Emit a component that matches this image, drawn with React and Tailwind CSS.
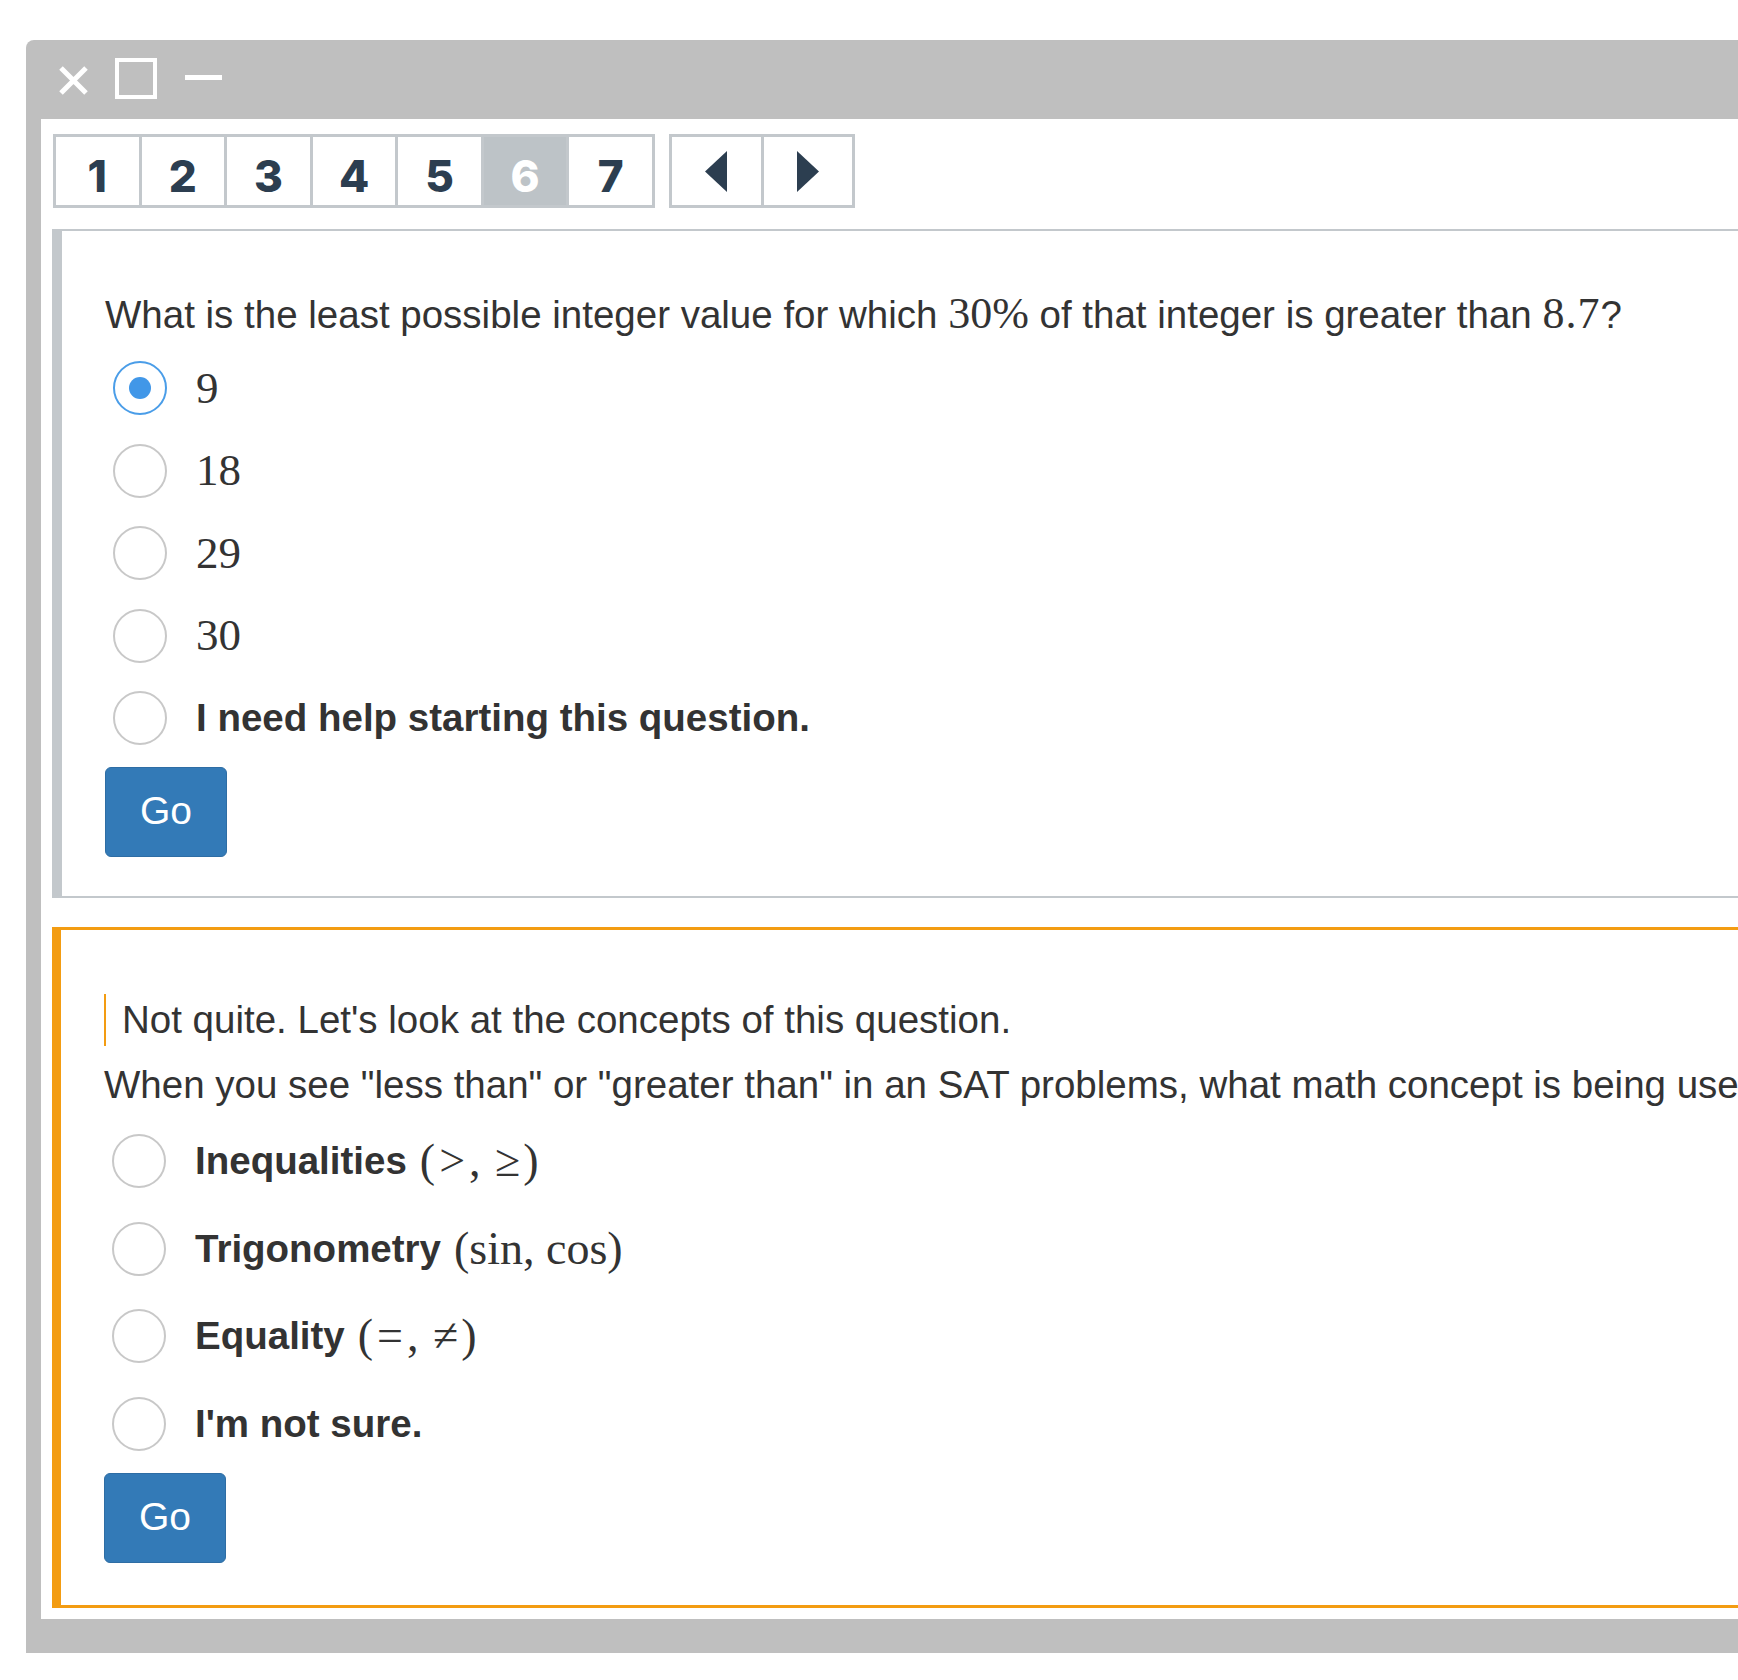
import React, { useState } from 'react';

const sans = { fontFamily: '"Liberation Sans", Arial, sans-serif' };
const serif = { fontFamily: '"Liberation Serif", "DejaVu Serif", serif' };

function Radio({ checked }) {
  return (
    <span
      className={`flex items-center justify-center w-[54px] h-[54px] shrink-0 rounded-full border-2 bg-white ${checked ? 'border-[#4a9de8]' : 'border-[#c8c8c8]'}`}
    >
      {checked && <span className="block w-[22px] h-[22px] rounded-full bg-[#4197e8]" />}
    </span>
  );
}

function Option({ checked, onClick, height, children }) {
  return (
    <div className={`flex items-center ${height}`} onClick={onClick}>
      <span className="ml-[8px]">
        <Radio checked={checked} />
      </span>
      <span className="ml-[29px] flex items-center text-[#333] leading-none">{children}</span>
    </div>
  );
}

function GoButton() {
  return (
    <button
      className="w-[122px] h-[90px] rounded-[6px] bg-[#337ab7] border border-[#2e6da4] text-white text-[39px]"
      style={sans}
    >
      Go
    </button>
  );
}

function Num({ children }) {
  return <span className="text-[45px]" style={serif}>{children}</span>;
}

function Bold({ children }) {
  return <span className="font-bold text-[38.5px]" style={sans}>{children}</span>;
}

// math group like (a, b) with relation spacing
function MathPair({ a, b, rel }) {
  return (
    <span className="ml-[13px] text-[46px] whitespace-nowrap" style={serif}>
      (<span className={rel ? 'mx-[4px]' : ''}>{a}</span>,{' '}
      <span className={rel ? 'mx-[3px]' : ''}>{b}</span>)
    </span>
  );
}

export default function App() {
  const [first, setFirst] = useState(0);
  const [second, setSecond] = useState(-1);
  const pages = [1, 2, 3, 4, 5, 6, 7];
  const current = 6;

  const answers = ['9', '18', '29', '30'];
  const concepts = [
    { name: 'Inequalities', a: '>', b: '≥', rel: true },
    { name: 'Trigonometry', a: 'sin', b: 'cos', rel: false },
    { name: 'Equality', a: '=', b: '≠', rel: true },
  ];

  return (
    <div className="w-[1738px] h-[1680px] overflow-hidden bg-white pt-[40px] pl-[26px]" style={sans}>
      <div className="w-[1800px] bg-[#bfbfbf] rounded-tl-[8px] pl-[15px] pb-[34px]">
        {/* title bar */}
        <div className="h-[79px] flex items-center pl-[17px]">
          <svg width="31" height="31" viewBox="0 0 31 31" className="mt-[1px]">
            <path d="M3 3 L28 28 M28 3 L3 28" stroke="white" strokeWidth="5" fill="none" />
          </svg>
          <div className="ml-[26px] w-[42px] h-[41px] border-4 border-white -mt-[2px]" />
          <div className="ml-[28px] w-[37px] h-[5px] bg-white -mt-[4px]" />
        </div>

        <div className="bg-white pt-[15px] pb-[11px] pl-[11px]">
          {/* pager */}
          <div className="flex ml-[1px]">
            <div className="flex w-[602px] h-[74px] border-[3px] border-[#c3c8cc] divide-x-[3px] divide-[#c3c8cc]">
              {pages.map(p => (
                <div
                  key={p}
                  className={`flex-1 flex items-center justify-center pt-[9px] text-[44px] font-extrabold ${p === current ? 'bg-[#bdc3c7] text-white' : 'bg-white text-[#2c3e50]'}`}
                  style={{ fontFamily: 'Inter, "Noto Sans", sans-serif' }}
                >
                  {p}
                </div>
              ))}
            </div>
            <div className="flex ml-[14px] w-[186px] h-[74px] border-[3px] border-[#c3c8cc] divide-x-[3px] divide-[#c3c8cc]">
              <div className="flex-1 flex items-center justify-center">
                <svg width="22" height="41" viewBox="0 0 22 41">
                  <path d="M22 0 L22 41 L0 20.5 Z" fill="#2c3e50" />
                </svg>
              </div>
              <div className="flex-1 flex items-center justify-center">
                <svg width="22" height="41" viewBox="0 0 22 41">
                  <path d="M0 0 L0 41 L22 20.5 Z" fill="#2c3e50" />
                </svg>
              </div>
            </div>
          </div>

          {/* question card */}
          <div className="mt-[21px] border-l-[10px] border-t-2 border-b-2 border-[#c3c8cc] pl-[43px] pt-[57px] pb-[39px]">
            <p className="text-[38.5px] leading-[52px] text-[#333] whitespace-nowrap">
              What is the least possible integer value for which <span className="text-[44px]" style={serif}>30%</span> of that integer is greater than <span className="text-[44px] tracking-[1px]" style={serif}>8.7</span>?
            </p>
            <div className="mt-[6px]">
              {answers.map((a, i) => (
                <Option key={a} height="h-[82.5px]" checked={first === i} onClick={() => setFirst(i)}>
                  <Num>{a}</Num>
                </Option>
              ))}
              <Option height="h-[82.5px]" checked={first === 4} onClick={() => setFirst(4)}>
                <Bold>I need help starting this question.</Bold>
              </Option>
            </div>
            <div className="mt-[7px]">
              <GoButton />
            </div>
          </div>

          {/* hint card */}
          <div className="mt-[29px] border-l-[9px] border-t-[3px] border-b-[3px] border-[#f39c12] pl-[43px] pt-[64px] pb-[42px]">
            <div className="border-l-2 border-[#f39c12] pl-[16px] h-[52px]">
              <p className="text-[38.5px] leading-[52px] text-[#333] whitespace-nowrap">
                Not quite. Let's look at the concepts of this question.
              </p>
            </div>
            <p className="mt-[13px] text-[38.5px] leading-[52px] text-[#333] whitespace-nowrap">
              When you see "less than" or "greater than" in an SAT problems, what math concept is being used?
            </p>
            <div className="mt-[7px]">
              {concepts.map((c, i) => (
                <Option key={c.name} height="h-[87.5px]" checked={second === i} onClick={() => setSecond(i)}>
                  <Bold>{c.name}</Bold>
                  <MathPair a={c.a} b={c.b} rel={c.rel} />
                </Option>
              ))}
              <Option height="h-[87.5px]" checked={second === 3} onClick={() => setSecond(3)}>
                <Bold>I'm not sure.</Bold>
              </Option>
            </div>
            <div className="mt-[5px]">
              <GoButton />
            </div>
          </div>
        </div>
      </div>
    </div>
  );
}
